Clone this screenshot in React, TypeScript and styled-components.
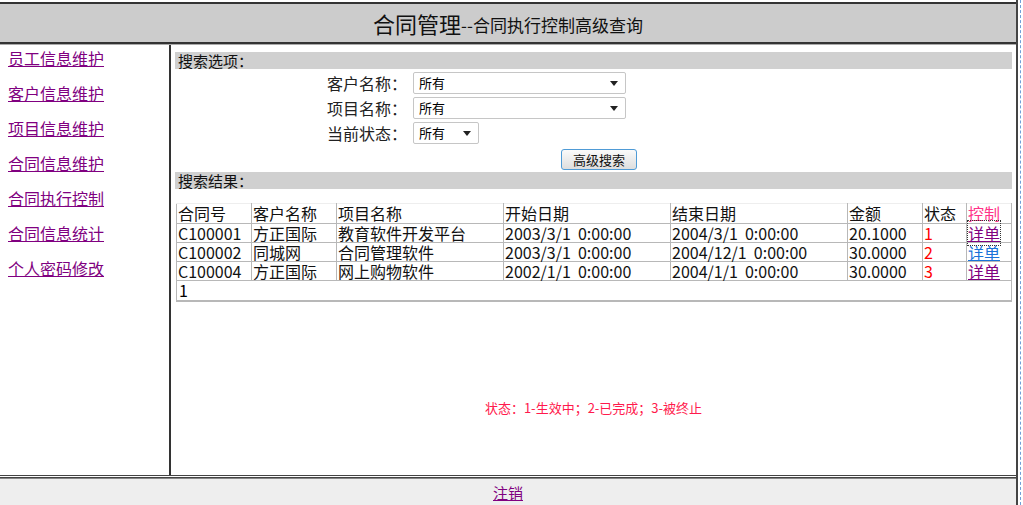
import React from 'react';
import styled, { createGlobalStyle } from 'styled-components';

const GlobalStyle = createGlobalStyle`
    html, body {
        margin: 0;
        padding: 0;
        background: #FFFFFF;
        font-family: 'Noto Sans CJK SC', 'Noto Sans', sans-serif;
        color: #000000;
    }
`;

const menus = ['员工信息维护', '客户信息维护', '项目信息维护', '合同信息维护', '合同执行控制', '合同信息统计', '个人密码修改'];

const rows = [
    { no: 'C100001', customer: '方正国际', project: '教育软件开发平台', start: '2003/3/1  0:00:00', end: '2004/3/1  0:00:00', amount: '20.1000', state: '1', link: 'focus' },
    { no: 'C100002', customer: '同城网', project: '合同管理软件', start: '2003/3/1  0:00:00', end: '2004/12/1  0:00:00', amount: '30.0000', state: '2', link: 'new' },
    { no: 'C100004', customer: '方正国际', project: '网上购物软件', start: '2002/1/1  0:00:00', end: '2004/1/1  0:00:00', amount: '30.0000', state: '3', link: 'visited' },
];

const App = () => {
    return (
        <Frame>
            <GlobalStyle />
            <Header>
                <Title>合同管理</Title>
                <SubTitle>--合同执行控制高级查询</SubTitle>
            </Header>
            <Main>
                <SideBar>
                    {menus.map((m) => (
                        <MenuLink key={m} href="#">{m}</MenuLink>
                    ))}
                </SideBar>
                <Content>
                    <SectionBar>搜索选项：</SectionBar>
                    <SearchForm>
                        <Label>客户名称：</Label>
                        <SelectBox $width={213}>
                            <span>所有</span>
                            <Arrow />
                        </SelectBox>
                        <Label>项目名称：</Label>
                        <SelectBox $width={213}>
                            <span>所有</span>
                            <Arrow />
                        </SelectBox>
                        <Label>当前状态：</Label>
                        <SelectBox $width={66}>
                            <span>所有</span>
                            <Arrow />
                        </SelectBox>
                        <span />
                        <SearchButton>高级搜索</SearchButton>
                    </SearchForm>
                    <SectionBar>搜索结果：</SectionBar>
                    <ResultTable>
                        <colgroup>
                            <col style={{ width: 75 }} />
                            <col style={{ width: 85 }} />
                            <col style={{ width: 167 }} />
                            <col style={{ width: 167 }} />
                            <col style={{ width: 177 }} />
                            <col style={{ width: 75 }} />
                            <col style={{ width: 44 }} />
                            <col style={{ width: 45 }} />
                        </colgroup>
                        <thead>
                            <tr>
                                <HeadCell>合同号</HeadCell>
                                <HeadCell>客户名称</HeadCell>
                                <HeadCell>项目名称</HeadCell>
                                <HeadCell>开始日期</HeadCell>
                                <HeadCell>结束日期</HeadCell>
                                <HeadCell>金额</HeadCell>
                                <HeadCell>状态</HeadCell>
                                <HeadCell $pink>控制</HeadCell>
                            </tr>
                        </thead>
                        <tbody>
                            {rows.map((r) => (
                                <tr key={r.no}>
                                    <Cell>{r.no}</Cell>
                                    <Cell>{r.customer}</Cell>
                                    <Cell>{r.project}</Cell>
                                    <Cell>{r.start}</Cell>
                                    <Cell>{r.end}</Cell>
                                    <Cell>{r.amount}</Cell>
                                    <Cell $red>{r.state}</Cell>
                                    <Cell>
                                        <DetailLink href="#" $kind={r.link}>详单</DetailLink>
                                    </Cell>
                                </tr>
                            ))}
                            <tr>
                                <PagerCell colSpan={8}>1</PagerCell>
                            </tr>
                        </tbody>
                    </ResultTable>
                    <Legend>状态：1-生效中；2-已完成；3-被终止</Legend>
                </Content>
            </Main>
            <Footer>
                <FooterLink href="#">注销</FooterLink>
            </Footer>
        </Frame>
    );
};

export default App;

const Frame = styled.div`
    width: 1018px;
    height: 505px;
    box-sizing: border-box;
    padding-top: 2px;
    border-right: 2px solid #444444;
    display: flex;
    flex-direction: column;
    position: relative;
    &::after {
        content: '';
        position: absolute;
        top: 0;
        bottom: 0;
        right: -5px;
        border-right: 1px dashed #6f9fd8;
    }
`;

const Header = styled.div`
    height: 38px;
    background: #CCCCCC;
    border-top: 2px solid #333333;
    border-bottom: 2px solid #333333;
    box-shadow: 0 1px 0 #AAAAAA;
    display: flex;
    align-items: center;
    justify-content: center;
    color: #111111;
`;

const Title = styled.span`
    font-size: 22px;
`;

const SubTitle = styled.span`
    font-size: 17px;
    margin-top: 3px;
`;

const Main = styled.div`
    flex: 1;
    display: flex;
    margin-top: 1px;
    border-bottom: 3px double #444444;
`;

const SideBar = styled.div`
    width: 171px;
    border-right: 2px solid #333333;
    display: flex;
    flex-direction: column;
    gap: 15px;
    padding: 3px 0 0 8px;
    box-sizing: border-box;
`;

const MenuLink = styled.a`
    color: #800080;
    font-size: 16px;
    line-height: 20px;
    text-decoration: underline;
`;

const Content = styled.div`
    flex: 1;
    padding: 7px 4px 0 4px;
    display: flex;
    flex-direction: column;
`;

const SectionBar = styled.div`
    background: #D0D0D0;
    height: 17px;
    line-height: 17px;
    font-size: 15px;
    padding-left: 3px;
    color: #111111;
`;

const SearchForm = styled.div`
    display: grid;
    grid-template-columns: 232px 222px;
    column-gap: 6px;
    row-gap: 3px;
    align-items: center;
    padding: 3px 0 2px;
`;

const Label = styled.span`
    text-align: right;
    font-size: 16px;
    line-height: 22px;
    color: #222222;
`;

const SelectBox = styled.div<{ $width: number }>`
    position: relative;
    width: ${(p) => p.$width}px;
    height: 22px;
    box-sizing: border-box;
    border: 1px solid #C6C6C6;
    border-radius: 2px;
    background: #FFFFFF;
    font-size: 13px;
    line-height: 20px;
    padding-left: 5px;
`;

const Arrow = styled.span`
    position: absolute;
    right: 7px;
    top: 8px;
    width: 0;
    height: 0;
    border-left: 4px solid transparent;
    border-right: 4px solid transparent;
    border-top: 5px solid #222222;
`;

const SearchButton = styled.button`
    justify-self: end;
    margin-right: -2px;
    margin-top: 2px;
    width: 76px;
    height: 21px;
    padding: 0;
    border: 1px solid #4f9bd6;
    border-radius: 3px;
    background: linear-gradient(#FAFAFA, #DEDEDE);
    font-family: 'Noto Sans CJK SC', sans-serif;
    font-size: 13px;
    line-height: 19px;
    color: #111111;
`;

const ResultTable = styled.table`
    margin-top: 14px;
    margin-left: 1px;
    width: 835px;
    border-collapse: collapse;
    table-layout: fixed;
    font-size: 16px;
`;

const HeadCell = styled.th<{ $pink?: boolean }>`
    font-weight: normal;
    text-align: left;
    height: 19px;
    line-height: 19px;
    padding: 0 1px;
    border: 1px solid #B8B8B8;
    border-top-color: #EEEEEE;
    color: ${(p) => (p.$pink ? '#ff3388' : '#111111')};
    white-space: nowrap;
`;

const Cell = styled.td<{ $red?: boolean }>`
    height: 18px;
    line-height: 18px;
    padding: 0 1px;
    border: 1px solid #B8B8B8;
    color: ${(p) => (p.$red ? '#ff0000' : '#111111')};
    white-space: pre;
`;

const PagerCell = styled.td`
    height: 19px;
    line-height: 19px;
    padding: 0 2px;
    border: 1px solid #B8B8B8;
    border-bottom-width: 2px;
`;

const DetailLink = styled.a<{ $kind: string }>`
    color: ${(p) => (p.$kind === 'new' ? '#1a73d9' : '#800080')};
    text-decoration: underline;
    outline: ${(p) => (p.$kind === 'focus' ? '1px dotted #333333' : 'none')};
`;

const Legend = styled.div`
    margin-top: 96px;
    text-align: center;
    font-size: 13px;
    color: #ff1a4d;
`;

const Footer = styled.div`
    height: 26px;
    background: #EEEEEE;
    border-top: 1px solid #888888;
    display: flex;
    justify-content: center;
    align-items: center;
`;

const FooterLink = styled.a`
    color: #800080;
    font-size: 15px;
    text-decoration: underline;
`;
